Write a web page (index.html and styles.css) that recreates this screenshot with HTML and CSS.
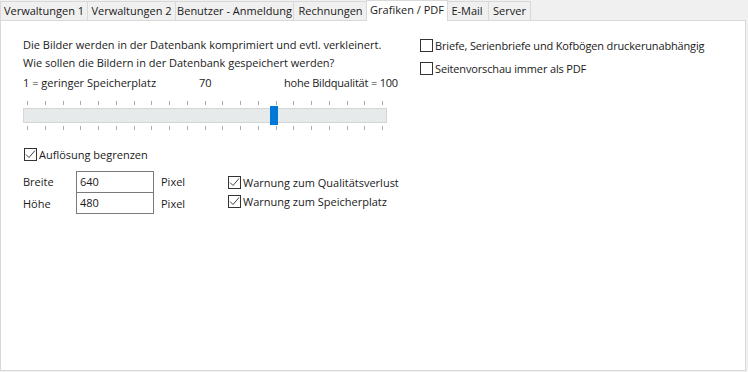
FILE: index.html
```html
<!DOCTYPE html>
<html lang="de">
<head>
<meta charset="utf-8">
<link rel="stylesheet" href="styles.css">
</head>
<body>
<div class="tabs">
  <div class="tab t1">Verwaltungen 1</div>
  <div class="tab t2">Verwaltungen 2</div>
  <div class="tab t3">Benutzer - Anmeldung</div>
  <div class="tab t4">Rechnungen</div>
  <div class="tab t5 active">Grafiken / PDF</div>
  <div class="tab t6">E-Mail</div>
  <div class="tab t7">Server</div>
</div>
<div class="panel">
  <div class="left">
    <p class="line">Die Bilder werden in der Datenbank komprimiert und evtl. verkleinert.</p>
    <p class="line">Wie sollen die Bildern in der Datenbank gespeichert werden?</p>
    <div class="scale">
      <span class="s-min">1 = geringer Speicherplatz</span>
      <span class="s-val">70</span>
      <span class="s-max">hohe Bildqualität = 100</span>
    </div>
    <div class="slider">
      <div class="ticks"><i></i><i></i><i></i><i></i><i></i><i></i><i></i><i></i><i></i><i></i><i></i><i></i><i></i><i></i><i></i><i></i><i></i><i></i><i></i><i></i><i></i></div>
      <div class="track"></div>
      <div class="ticks"><i></i><i></i><i></i><i></i><i></i><i></i><i></i><i></i><i></i><i></i><i></i><i></i><i></i><i></i><i></i><i></i><i></i><i></i><i></i><i></i><i></i></div>
      <div class="thumb"></div>
    </div>
    <label class="check limit"><span class="box"><svg width="11" height="11" viewBox="0 0 11 11"><polyline points="1,5.5 4,8.5 10,1.5" fill="none" stroke="#444" stroke-width="1"/></svg></span>Auflösung begrenzen</label>
    <div class="res">
      <div class="dims">
        <span class="lbl">Breite</span><span class="inp top">640</span><span class="unit">Pixel</span>
        <span class="lbl">Höhe</span><span class="inp">480</span><span class="unit">Pixel</span>
      </div>
      <div class="warns">
        <label class="check"><span class="box"><svg width="11" height="11" viewBox="0 0 11 11"><polyline points="1,5.5 4,8.5 10,1.5" fill="none" stroke="#444" stroke-width="1"/></svg></span>Warnung zum Qualitätsverlust</label>
        <label class="check"><span class="box"><svg width="11" height="11" viewBox="0 0 11 11"><polyline points="1,5.5 4,8.5 10,1.5" fill="none" stroke="#444" stroke-width="1"/></svg></span>Warnung zum Speicherplatz</label>
      </div>
    </div>
  </div>
  <div class="right">
    <label class="check"><span class="box"></span>Briefe, Serienbriefe und Kofbögen druckerunabhängig</label>
    <label class="check second"><span class="box"></span>Seitenvorschau immer als PDF</label>
  </div>
</div>
</body>
</html>
```

FILE: styles.css
```css
* { box-sizing: border-box; }
html, body { margin: 0; padding: 0; }
body {
  width: 748px;
  height: 372px;
  background: #f0f0f0;
  font-family: "Open Sans", "Noto Sans", sans-serif;
  font-size: 11px;
  color: #1a1a1a;
  overflow: hidden;
}
.tabs {
  display: flex;
  height: 20px;
  align-items: flex-end;
  position: relative;
  z-index: 2;
}
.tab {
  height: 19px;
  border-top: 1px solid #d9d9d9;
  border-right: 1px solid #d9d9d9;
  background: #f0f0f0;
  line-height: 18px;
  text-align: center;
  white-space: nowrap;
}
.t1 { width: 88px; border-left: 1px solid #d9d9d9; }
.t2 { width: 88px; }
.t3 { width: 118px; }
.t4 { width: 74px; }
.t5 { width: 78px; }
.t6 { width: 43px; }
.t7 { width: 42px; }
.tab.active {
  height: 21px;
  margin: 0 -2px -1px -2px;
  width: 82px;
  background: #fff;
  border-left: 1px solid #d9d9d9;
  line-height: 17px;
  position: relative;
  z-index: 3;
}
.panel {
  width: 746px;
  height: 351px;
  background: #fff;
  border: 1px solid #d9d9d9;
  display: flex;
  padding: 15px 0 0 22px;
}
.left { width: 397px; flex: none; }
.right { padding-top: 0; letter-spacing: -0.15px; }
.line { margin: 0; height: 18px; line-height: 18px; }
.scale {
  display: flex;
  height: 18px;
  line-height: 18px;
  margin-top: 2px;
}
.s-min { width: 176px; }
.s-val { width: 85px; }
.s-max { white-space: nowrap; letter-spacing: -0.2px; }
.slider {
  position: relative;
  width: 364px;
  margin-top: 9px;
}
.ticks {
  display: flex;
  justify-content: space-between;
  width: 356px;
  margin-left: 4px;
  height: 4px;
}
.ticks i { display: block; width: 1px; height: 4px; background: #ababab; }
.track {
  height: 15px;
  margin: 3px 0;
  background: #e7eaea;
  border: 1px solid #d6d6d6;
}
.thumb {
  position: absolute;
  left: 247px;
  top: 5px;
  width: 8px;
  height: 19px;
  background: #0078d7;
}
.check {
  display: flex;
  align-items: center;
  height: 18px;
  white-space: nowrap;
}
.box {
  width: 13px;
  height: 13px;
  border: 1px solid #333;
  background: #fff;
  margin-right: 2px;
  display: flex;
  align-items: center;
  justify-content: center;
  flex: none;
}
.limit { margin: 15px 0 0 1px; }
.res { display: flex; margin-top: 8px; }
.dims {
  display: grid;
  grid-template-columns: 53px 78px auto;
  grid-template-rows: 22px 21px;
  width: 204px;
}
.lbl, .unit { line-height: 22px; }
.unit { padding-left: 7px; }
.inp {
  border: 1px solid #7a7a7a;
  border-top: none;
  padding-left: 3px;
  line-height: 20px;
}
.inp.top { border-top: 1px solid #7a7a7a; line-height: 20px; }
.warns { padding-top: 2px; margin-left: 1px; }
.warns .check { height: 19px; }
.right .check.second { margin-top: 5px; }
```
